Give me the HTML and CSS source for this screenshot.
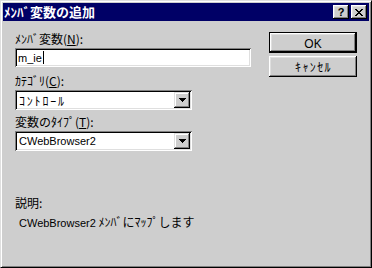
FILE: index.html
```html
<!DOCTYPE html>
<html lang="ja">
<head>
<meta charset="utf-8">
<link rel="stylesheet" href="styles.css">
</head>
<body>
<div class="window">
  <div class="titlebar">
    <span class="title">ﾒﾝﾊﾞ変数の追加</span>
    <div class="tbtns">
      <button class="tbtn help">?</button>
      <button class="tbtn close"><svg width="8" height="7" viewBox="0 0 8 7"><path d="M0 0h2v1h1v1h2V1h1V0h2v1H7v1H6v1H5v1h1v1h1v1h1v1H6V6H5V5H3v1H2v1H0V6h1V5h1V4h1V3H2V2H1V1H0z" fill="#000"/></svg></button>
    </div>
  </div>
  <div class="content">
    <div class="left">
      <div class="label l1">ﾒﾝﾊﾞ変数(<u>N</u>):</div>
      <div class="edit"><span class="val lat">m_ie</span><span class="caret"></span></div>
      <div class="label l2">ｶﾃｺﾞﾘ(<u>C</u>):</div>
      <div class="combo"><span class="val kana">ｺﾝﾄﾛｰﾙ</span><span class="drop"><svg width="7" height="4" viewBox="0 0 7 4"><path d="M0 0h7v1H6v1H5v1H4v1H3V3H2V2H1V1H0z" fill="#000"/></svg></span></div>
      <div class="label l3">変数のﾀｲﾌﾟ(<u>T</u>):</div>
      <div class="combo"><span class="val lat">CWebBrowser2</span><span class="drop"><svg width="7" height="4" viewBox="0 0 7 4"><path d="M0 0h7v1H6v1H5v1H4v1H3V3H2V2H1V1H0z" fill="#000"/></svg></span></div>
      <div class="label desc-h">説明:</div>
      <div class="desc"><span class="lat">CWebBrowser2</span> ﾒﾝﾊﾞにﾏｯﾌﾟします</div>
    </div>
    <div class="right">
      <button class="btn default"><span class="lat ok">OK</span></button>
      <button class="btn"><span class="cancel">ｷｬﾝｾﾙ</span></button>
    </div>
  </div>
</div>
</body>
</html>
```
FILE: styles.css
```css
html, body {
  margin: 0;
  padding: 0;
  background: #cecece;
}
body {
  font-family: "Noto Sans CJK JP", "Liberation Sans", sans-serif;
  font-size: 12px;
  color: #000;
}
.lat {
  font-family: "Liberation Sans", "Noto Sans CJK JP", sans-serif;
  font-size: 11px;
}
.kana { letter-spacing: 1.8px; }
.cancel { letter-spacing: 1.4px; margin-left: 1px; }
.window {
  width: 372px;
  height: 268px;
  box-sizing: border-box;
  background: #cecece;
  border-top: 1px solid #dfdfdf;
  border-left: 1px solid #dfdfdf;
  border-right: 1px solid #000;
  border-bottom: 1px solid #000;
  padding: 2px;
  box-shadow: inset 1px 1px 0 #fff, inset -1px -1px 0 #808080;
  display: flex;
  flex-direction: column;
}
.titlebar {
  height: 18px;
  background: #000066;
  display: flex;
  align-items: center;
  justify-content: space-between;
  padding: 0 2px 0 1px;
}
.title {
  color: #fff;
  font-weight: bold;
  font-size: 13px;
  line-height: 18px;
}
.tbtns {
  display: flex;
  gap: 2px;
}
.tbtn {
  width: 16px;
  height: 14px;
  padding: 0;
  margin: 0;
  background: #cecece;
  border: none;
  box-shadow: inset -1px -1px 0 #000, inset 1px 1px 0 #fff, inset -2px -2px 0 #808080, inset 2px 2px 0 #dfdfdf;
  display: flex;
  align-items: center;
  justify-content: center;
  font-family: "Liberation Sans", sans-serif;
  font-weight: bold;
  font-size: 11px;
  line-height: 14px;
  color: #000;
}
.tbtn svg { display: block; }
.content {
  flex: 1;
  display: flex;
  padding: 10px 0 0 12px;
}
.left {
  width: 236px;
  display: flex;
  flex-direction: column;
}
.label {
  height: 14px;
  line-height: 14px;
  white-space: nowrap;
}
.l1 { margin-top: 1px; }
.l2 { margin-top: 7px; }
.l3 { margin-top: 5px; }
.edit, .combo {
  box-sizing: border-box;
  background: #fff;
  box-shadow: inset 1px 1px 0 #808080, inset -1px -1px 0 #fff, inset 2px 2px 0 #000, inset -2px -2px 0 #dfdfdf;
  display: flex;
  align-items: center;
}
.edit {
  height: 19px;
  margin-top: 2px;
  padding-left: 3px;
}
.caret {
  width: 1px;
  height: 13px;
  background: #000;
  margin-left: 1px;
}
.combo {
  width: 177px;
  height: 20px;
  margin-top: 2px;
  padding: 2px;
  justify-content: space-between;
}
.combo .val { padding-left: 2px; }
.drop {
  width: 16px;
  height: 16px;
  box-sizing: border-box;
  background: #cecece;
  box-shadow: inset -1px -1px 0 #000, inset 1px 1px 0 #dfdfdf, inset -2px -2px 0 #808080, inset 2px 2px 0 #fff;
  display: flex;
  align-items: center;
  justify-content: center;
}
.desc-h { margin-top: 45px; }
.desc {
  margin-top: 5px;
  padding-left: 4px;
  height: 14px;
  line-height: 14px;
  white-space: nowrap;
}
.right {
  margin-left: 18px;
  display: flex;
  flex-direction: column;
  gap: 3px;
  padding-top: 1px;
}
.btn {
  width: 88px;
  height: 21px;
  padding: 0;
  margin: 0;
  border: none;
  background: #cecece;
  font-family: "Noto Sans CJK JP", "Liberation Sans", sans-serif;
  font-size: 12px;
  color: #000;
  box-shadow: inset -1px -1px 0 #000, inset 1px 1px 0 #fff, inset -2px -2px 0 #808080, inset 2px 2px 0 #dfdfdf;
}
.btn .ok { font-size: 12px; }
.btn.default {
  box-shadow: inset 0 0 0 1px #000, inset -2px -2px 0 #000, inset 2px 2px 0 #fff, inset -3px -3px 0 #808080, inset 3px 3px 0 #dfdfdf;
}
```
